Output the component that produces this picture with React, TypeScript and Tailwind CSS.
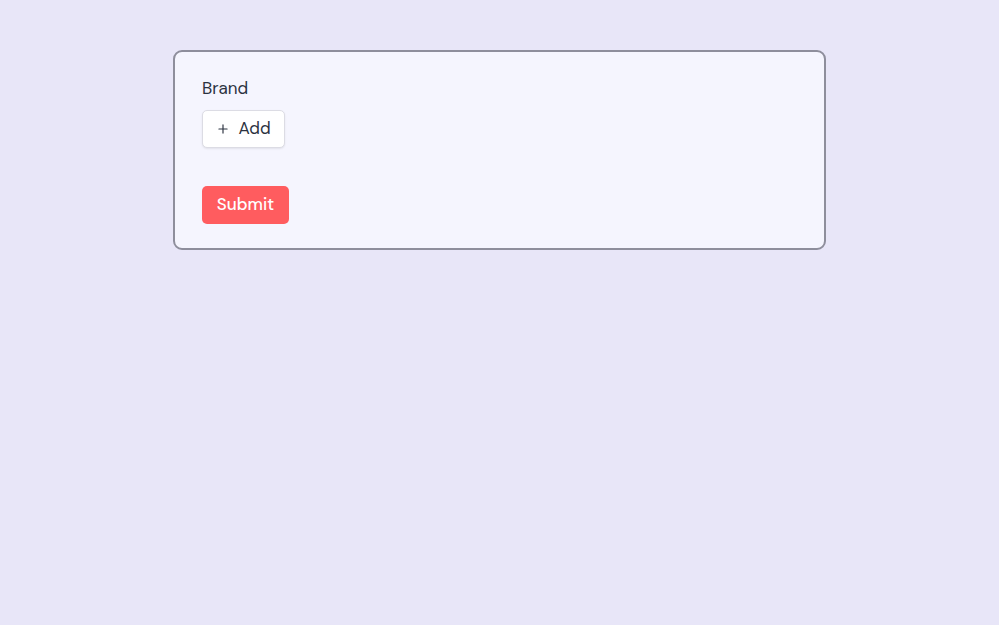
import { Plus } from 'lucide-react';

export default function App() {
  return (
    <div
      className="min-h-screen w-full bg-[#e8e6f8] pt-[50px]"
      style={{ fontFamily: '"DM Sans", Lato, "Noto Sans", sans-serif' }}
    >
      <form
        onSubmit={(e) => e.preventDefault()}
        className="mx-auto w-[653px] rounded-[9px] border-2 border-[#8e8e9c] bg-[#f5f5fe] px-[27px] pt-[26px] pb-[24px]"
      >
        <div className="flex flex-col items-start">
          <label className="text-[17px] leading-[20px] text-[#2b3240]">Brand</label>

          {/* Add button */}
          <button
            type="button"
            className="mt-3 flex h-[38px] w-[83px] items-center justify-center gap-2 rounded-[5px] border border-[#dcdce4] bg-white text-[17px] text-[#2b3240] shadow-[0_1px_2px_rgba(0,0,0,0.08)]"
          >
            <Plus className="h-[14px] w-[14px]" strokeWidth={2} />
            <span>Add</span>
          </button>

          {/* Submit */}
          <button
            type="submit"
            className="mt-[38px] flex h-[38px] w-[87px] items-center justify-center rounded-[5px] bg-[#ff5c5f] text-[17px] font-medium text-white"
          >
            Submit
          </button>
        </div>
      </form>
    </div>
  );
}
